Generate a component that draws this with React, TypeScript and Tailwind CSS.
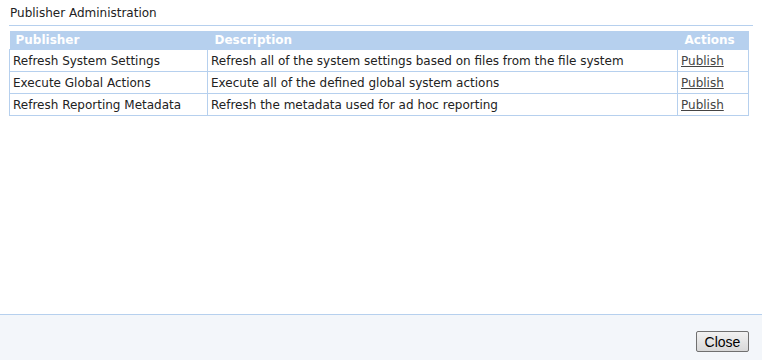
const rows = [
  {
    name: "Refresh System Settings",
    desc: "Refresh all of the system settings based on files from the file system",
  },
  {
    name: "Execute Global Actions",
    desc: "Execute all of the defined global system actions",
  },
  {
    name: "Refresh Reporting Metadata",
    desc: "Refresh the metadata used for ad hoc reporting",
  },
];

export default function App() {
  return (
    <div
      className="flex h-[360px] w-[762px] flex-col bg-white text-[12px] text-[#222]"
      style={{ fontFamily: '"DejaVu Sans", Verdana, sans-serif' }}
    >
      <div className="flex-1 px-[9px]">
        <div className="h-[26px] border-b border-[#b6d0ee] pl-[1px] pt-[6px] leading-[15px]">
          Publisher Administration
        </div>
        <table className="mt-[5px] w-[740px] border-collapse">
          <thead>
            <tr className="h-[18px] bg-[#b6d0ee] text-left text-[12px] font-bold text-white">
              <th className="w-[198px] px-[6px] py-0 leading-[18px]">Publisher</th>
              <th className="px-[7px] py-0 leading-[18px]">Description</th>
              <th className="w-[71px] px-[7px] py-0 leading-[18px]">Actions</th>
            </tr>
          </thead>
          <tbody>
            {rows.map((r) => (
              <tr key={r.name} className="h-[22px]">
                <td className="border border-[#b6d0ee] px-[3px] py-0">{r.name}</td>
                <td className="border border-[#b6d0ee] px-[3px] py-0">{r.desc}</td>
                <td className="border border-[#b6d0ee] px-[3px] py-0">
                  <a href="#" className="text-[#444] underline">
                    Publish
                  </a>
                </td>
              </tr>
            ))}
          </tbody>
        </table>
      </div>
      <div className="flex h-[46px] items-end justify-end border-t border-[#b6d0ee] bg-[#f3f6fa] pb-[8px] pr-[13px]">
        <button
          className="h-[21px] w-[53px] rounded-[2px] border border-[#707070] bg-gradient-to-b from-[#f2f2f2] to-[#d8d8d8] text-[14px] leading-none text-black"
          style={{ fontFamily: '"Liberation Sans", Arial, sans-serif' }}
        >
          Close
        </button>
      </div>
    </div>
  );
}
